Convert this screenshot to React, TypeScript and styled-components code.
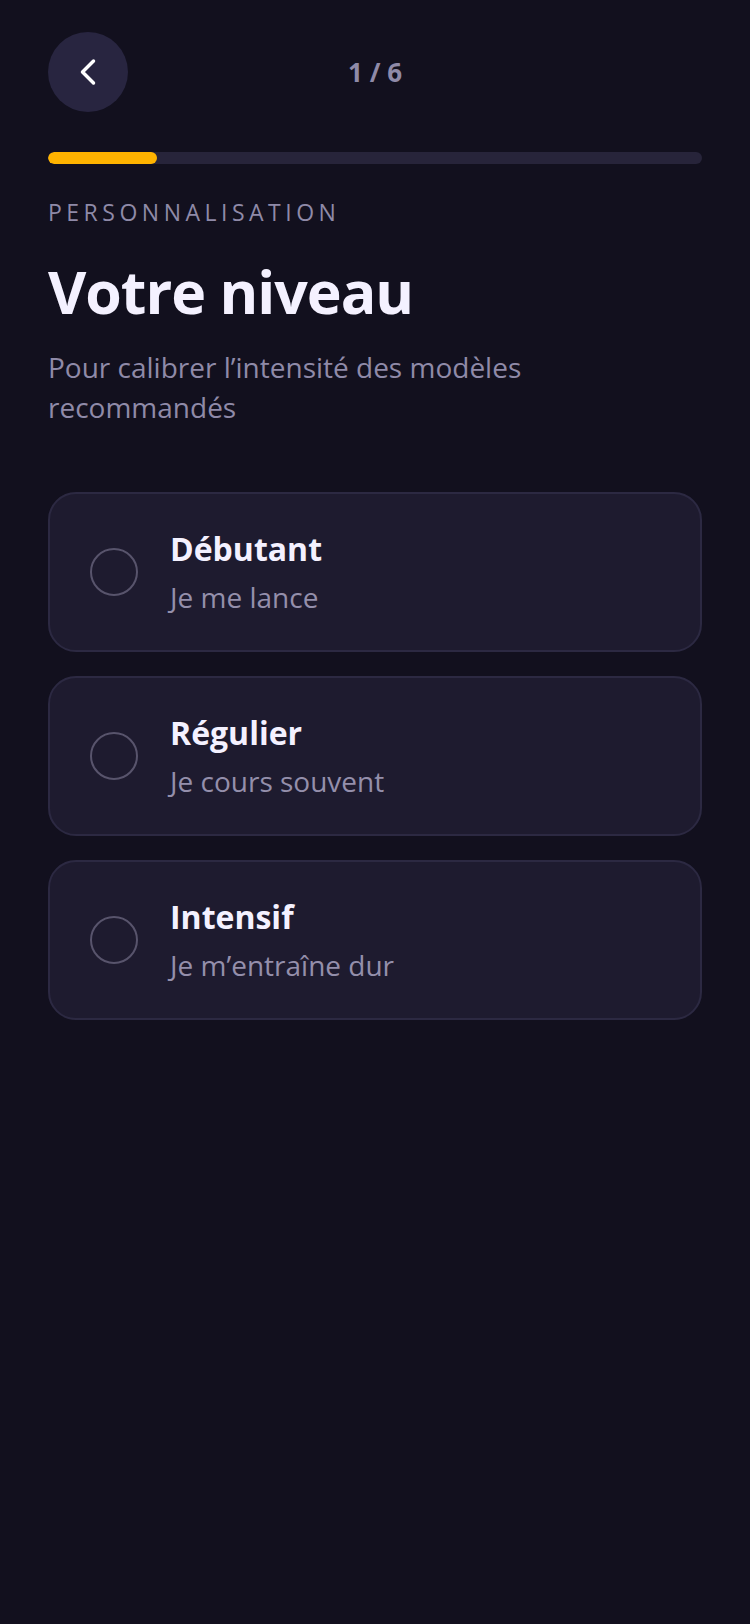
import styled, { createGlobalStyle } from "styled-components";
import { ChevronLeft } from "lucide-react";

const GlobalStyle = createGlobalStyle`
  html, body {
    margin: 0;
    padding: 0;
    background: #12101e;
  }
  * {
    box-sizing: border-box;
  }
`;

type Level = {
  id: string;
  title: string;
  hint: string;
};

const levels: Level[] = [
  { id: "debutant", title: "Débutant", hint: "Je me lance" },
  { id: "regulier", title: "Régulier", hint: "Je cours souvent" },
  { id: "intensif", title: "Intensif", hint: "Je m’entraîne dur" },
];

const step = 1;
const total = 6;

export default function App() {
  return (
    <>
      <GlobalStyle />
      <Page>
        <Header>
          <BackButton aria-label="Retour">
            <ChevronLeft size={44} strokeWidth={1.9} color="#ffffff" />
          </BackButton>
          <Counter>
            {step} / {total}
          </Counter>
          <Spacer />
        </Header>

        <Track>
          <Fill style={{ width: `${(step / total) * 100}%` }} />
        </Track>

        <Eyebrow>Personnalisation</Eyebrow>
        <Title>Votre niveau</Title>
        <Lead>Pour calibrer l’intensité des modèles recommandés</Lead>

        <Options>
          {levels.map((level) => (
            <OptionCard key={level.id} type="button">
              <Radio />
              <OptionText>
                <OptionTitle>{level.title}</OptionTitle>
                <OptionHint>{level.hint}</OptionHint>
              </OptionText>
            </OptionCard>
          ))}
        </Options>
      </Page>
    </>
  );
}

const Page = styled.div`
  min-height: 1624px;
  width: 750px;
  padding: 32px 48px;
  background: #12101e;
  font-family: "Open Sans", "Noto Sans", sans-serif;
  display: flex;
  flex-direction: column;
`;

const Header = styled.div`
  display: flex;
  align-items: center;
  justify-content: space-between;
  height: 80px;
`;

const BackButton = styled.button`
  width: 80px;
  height: 80px;
  border-radius: 50%;
  border: none;
  padding: 0;
  background: #282540;
  display: flex;
  align-items: center;
  justify-content: center;
  cursor: pointer;
`;

const Counter = styled.div`
  font-size: 26px;
  font-weight: 700;
  color: #8f8aa8;
  line-height: 32px;
`;

const Spacer = styled.div`
  width: 80px;
`;

const Track = styled.div`
  margin-top: 40px;
  height: 12px;
  border-radius: 6px;
  background: #27243a;
  overflow: hidden;
`;

const Fill = styled.div`
  height: 100%;
  border-radius: 6px;
  background: #ffb300;
`;

const Eyebrow = styled.div`
  margin-top: 32px;
  font-size: 23px;
  line-height: 32px;
  letter-spacing: 4.5px;
  text-transform: uppercase;
  color: #8f8aa8;
`;

const Title = styled.h1`
  margin: 29px 0 0;
  font-size: 59px;
  line-height: 68px;
  font-weight: 700;
  letter-spacing: -1px;
  color: #f4f1ff;
`;

const Lead = styled.p`
  margin: 22px 0 0;
  font-size: 28px;
  line-height: 40px;
  color: #8f8aa8;
`;

const Options = styled.div`
  margin-top: 65px;
  display: flex;
  flex-direction: column;
  gap: 24px;
`;

const OptionCard = styled.button`
  height: 160px;
  display: flex;
  align-items: center;
  gap: 32px;
  padding: 0 40px;
  border: 2px solid #2c2942;
  border-radius: 28px;
  background: #1e1b2f;
  text-align: left;
  font-family: inherit;
  cursor: pointer;
`;

const Radio = styled.span`
  flex: none;
  width: 48px;
  height: 48px;
  border-radius: 50%;
  border: 2px solid #58546c;
`;

const OptionText = styled.span`
  display: flex;
  flex-direction: column;
`;

const OptionTitle = styled.span`
  font-size: 32px;
  line-height: 40px;
  font-weight: 700;
  color: #f4f1ff;
`;

const OptionHint = styled.span`
  margin-top: 10px;
  font-size: 28px;
  line-height: 36px;
  color: #948fab;
`;
